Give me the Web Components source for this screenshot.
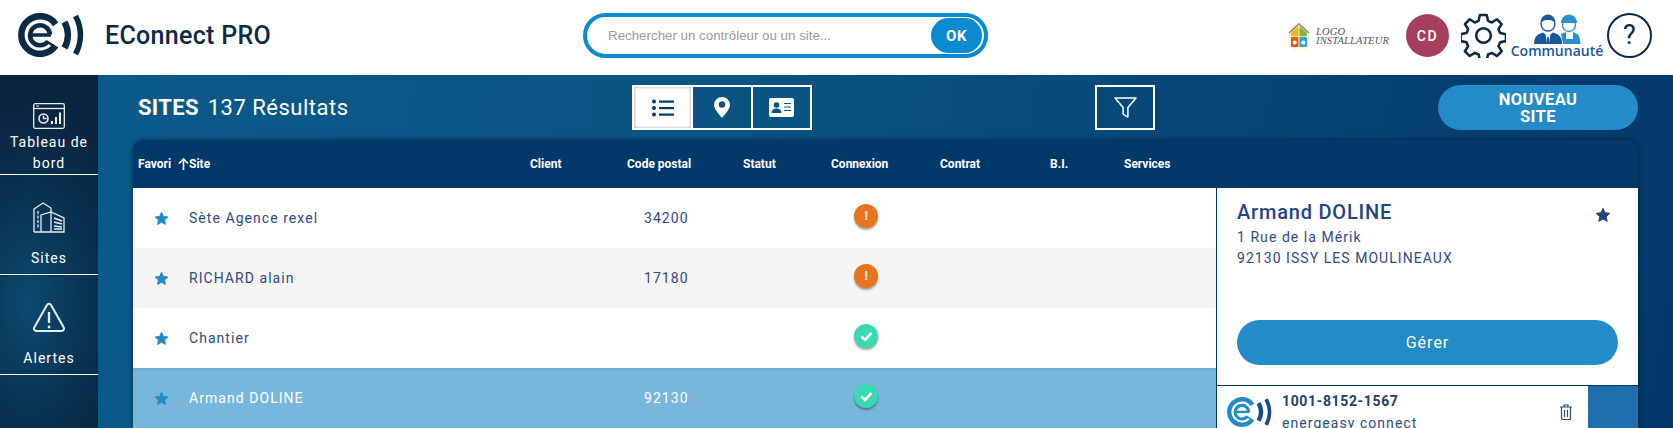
<!doctype html>
<html lang="fr">
<head>
<meta charset="utf-8">
<title>EConnect PRO</title>
<style>
  html, body { margin: 0; height: 100%; overflow: hidden; }
  body { font-family: Roboto, "Liberation Sans", sans-serif; }
</style>
</head>
<body>
<ec-app></ec-app>
<script>
const STAR = 'M12 2l3 6.600 7.200.9-5.300 4.900 1.400 7.100-6.300-3.600-6.300 3.600 1.400-7.100-5.300-4.900 7.200-.9z';

class EcLogo extends HTMLElement {
  connectedCallback() {
    const ring = this.getAttribute('ring') || '#0b2a45';
    const wave = this.getAttribute('wave') || ring;
    this.attachShadow({mode: 'open'}).innerHTML = `
      <style>:host { display: block; line-height: 0; }</style>
      <svg viewBox="0 0 66 44" width="66" height="44" fill="none" aria-hidden="true">
        <path stroke="${ring}" stroke-width="6.500" d="M37.600 11.300A18.800 18.800 0 1 0 37.600 32.700"/>
        <path stroke="${ring}" stroke-width="4.500" d="M32 21.500A10 10 0 1 0 29.500 29"/>
        <path stroke="${ring}" stroke-width="3.500" d="M12 22H33"/>
        <path stroke="${ring}" stroke-width="2.500" d="M28 28l7 4.500"/>
        <path stroke="${wave}" stroke-width="6.500" d="M46.500 9A27 27 0 0 1 46.500 35"/>
        <path stroke="${wave}" stroke-width="5.500" d="M57.500 3A39 39 0 0 1 57.500 41"/>
      </svg>`;
  }
}

class EcHeader extends HTMLElement {
  connectedCallback() {
    this.attachShadow({mode: 'open'}).innerHTML = `
      <style>
        :host { display: grid; grid-template-columns: 583px 405px 299px 386px; height: 75px; background: #fff; align-items: center; }
        .brand { display: flex; align-items: center; padding-left: 18px; margin-top: -5px; }
        .brand span { margin-left: 21px; font-size: 25px; font-weight: 500; color: #0b2a45; letter-spacing: .3px; }
        .search { display: flex; align-items: center; height: 45px; box-sizing: border-box; border: 4px solid #0a8ad0; border-radius: 23px; padding: 0 2px 0 21px; margin-top: -4px; }
        .search span { flex: 1; font-family: "Liberation Sans", sans-serif; font-size: 13.333px; color: #9a9a9a; }
        .search b { width: 51px; height: 35px; border-radius: 18px; background: #0a8ad0; color: #fff; font-size: 15px; font-weight: 700; letter-spacing: .5px; display: flex; align-items: center; justify-content: center; }
        .tools { display: flex; align-items: center; height: 75px; }
        .installer { display: flex; align-items: center; width: 119px; flex: none; margin-top: -4px; }
        .installer svg { filter: blur(.4px) drop-shadow(0 0 2px rgba(240,170,40,.6)); margin-left: 1px; }
        .installer i { font: italic 10.500px/9px "Liberation Serif", serif; color: #555; letter-spacing: .15px; margin-left: 6px; }
        .avatar { width: 43px; height: 43px; flex: none; border-radius: 50%; background: #a53f5b; color: #fff; font-size: 14px; font-weight: 500; letter-spacing: 1.500px; display: flex; align-items: center; justify-content: center; margin-top: -4px; }
        .gear { margin-left: 12px; line-height: 0; margin-top: -4px; }
        .community { display: flex; flex-direction: column; align-items: center; width: 90px; margin-left: 6px; font: 600 14px/13px "Open Sans", sans-serif; color: #17599b; margin-top: -4px; }
        .help { width: 45px; height: 45px; box-sizing: border-box; flex: none; border: 2px solid #0b2a45; border-radius: 50%; margin-left: 5px; margin-top: -4px; font: 400 27px/41px Roboto, sans-serif; text-align: center; color: #0b2a45; }
      </style>
      <div class="brand"><ec-logo></ec-logo><span>EConnect PRO</span></div>
      <div class="search"><span>Rechercher un contrôleur ou un site...</span><b>OK</b></div>
      <div></div>
      <div class="tools">
        <div class="installer">
          <svg viewBox="0 0 22 26" width="22" height="26" aria-hidden="true">
            <path d="M1 10 L11 1 L21 10" fill="none" stroke="#8a8a70" stroke-width="1.500"/>
            <path d="M3 10 L10.400 3.500 V13 H3z" fill="#e9b81e"/>
            <path d="M19 10 L11.600 3.500 V13 H19z" fill="#7cb63a"/>
            <rect x="3" y="14" width="7.400" height="10" rx="1" fill="#e8561a"/>
            <rect x="11.600" y="14" width="7.400" height="10" rx="1" fill="#2aa2e0"/>
            <circle cx="6.700" cy="19.500" r="2" fill="#fff"/><circle cx="15.300" cy="19.500" r="2" fill="#fff"/>
          </svg>
          <i>LOGO<br>INSTALLATEUR</i>
        </div>
        <div class="avatar">CD</div>
        <div class="gear">
          <svg viewBox="0 0 46 46" width="45" height="45" fill="none" stroke="#0b2a45" stroke-width="2.600" stroke-linejoin="round" aria-hidden="true">
            <path d="M19.300 2h7l1.300 6 3.900 1.700 5.200-3.300 4.900 4.900-3.300 5.200 1.700 3.900 6 1.300v7l-6 1.300-1.700 3.900 3.300 5.200-4.900 4.900-5.200-3.300-3.900 1.700-1.300 6h-7l-1.300-6-3.900-1.700-5.200 3.300-4.900-4.900 3.300-5.200-1.700-3.900-6-1.300v-7l6-1.300 1.700-3.900-3.300-5.200 4.900-4.900 5.200 3.300 3.900-1.700z"/>
            <circle cx="23" cy="23" r="7.500"/>
          </svg>
        </div>
        <div class="community">
          <svg viewBox="0 0 48 30" width="48" height="30" aria-hidden="true">
            <path fill="#2a8fd0" d="M28 20l5-2 3.500 3 3.500-3 4 2c2 1 3 3 3.500 10H30z"/>
            <path fill="#fff" d="M33 18h7v7h-7z"/>
            <circle cx="36" cy="11" r="6.500" fill="#fff" stroke="#2a8fd0" stroke-width="1.300"/>
            <path fill="#2a8fd0" d="M28 9c0-5 4-8.500 8-8.500s8 3.500 8 8.500z"/>
            <path fill="#17599b" d="M1 30c0-7 3-10 9-11.500l5 4 5-4c6 1.500 9 4.500 9 11.500z"/>
            <path fill="#fff" d="M12.500 20l2.500 2.500 2.500-2.500 -1.500 10h-2z"/>
            <path fill="#17599b" d="M14.300 23h1.400l1 7h-3.400z"/>
            <circle cx="15" cy="10" r="7" fill="#fff" stroke="#17599b" stroke-width="1.300"/>
            <path fill="#17599b" d="M8 10C7 4 11 .5 15 .5S23 4 22 10c-1-3-3-4-7-4S9 7 8 10z"/>
          </svg>
          <span>Communauté</span>
        </div>
        <div class="help">?</div>
      </div>`;
  }
}

class EcNavItem extends HTMLElement {
  connectedCallback() {
    this.attachShadow({mode: 'open'}).innerHTML = `
      <style>
        :host { display: block; height: 100px; box-sizing: border-box; border-bottom: 1px solid #fff; color: #fff; font-size: 14px; letter-spacing: 1px; line-height: 21px; text-align: center; }
        .icon { height: var(--label-top, 73px); box-sizing: border-box; padding-top: var(--icon-top, 26px); line-height: 0; color: #e8edf0; }
      </style>
      <div class="icon"><slot name="icon"></slot></div>
      <div><slot></slot></div>`;
  }
}

class EcSidebar extends HTMLElement {
  connectedCallback() {
    this.attachShadow({mode: 'open'}).innerHTML = `
      <style>
        :host { display: block; width: 98px; flex: none; background: radial-gradient(ellipse 110px 200px at 30% 65%, #0c4a70 0%, #08304f 60%, #0a2540 100%); }
      </style>
      <slot></slot>`;
  }
}

class EcToolbar extends HTMLElement {
  connectedCallback() {
    this.attachShadow({mode: 'open'}).innerHTML = `
      <style>
        :host { display: grid; grid-template-columns: 494px 180px 283px 60px 283px 200px; height: 45px; margin: 10px 0; padding-left: 40px; color: #fff; align-items: center; }
        .title { font-size: 22px; letter-spacing: .5px; white-space: nowrap; margin-top: -1px; }
        .title b { font-weight: 700; letter-spacing: .3px; margin-right: 3px; }
        .seg { display: flex; height: 45px; border: 2px solid #fff; box-sizing: border-box; gap: 2px; background: #fff; }
        .seg div { flex: 1; background: #0a5382; display: flex; align-items: center; justify-content: center; }
        .seg div.on { background: #fff; box-shadow: inset 0 0 3px #999; }
        .filter { height: 45px; border: 2px solid #fff; box-sizing: border-box; display: flex; align-items: center; justify-content: center; }
        .new { height: 45px; border-radius: 23px; background: #228bc8; font-size: 16.500px; font-weight: 700; line-height: 17px; text-align: center; display: flex; align-items: center; justify-content: center; letter-spacing: .4px; }
      </style>
      <div class="title"><b>SITES</b> 137 Résultats</div>
      <div class="seg">
        <div class="on"><svg viewBox="0 0 22 18" width="22" height="18" aria-hidden="true" fill="#063a68"><circle cx="2" cy="2.500" r="2"/><circle cx="2" cy="9" r="2"/><circle cx="2" cy="15.500" r="2"/><rect x="7" y="1.500" width="15" height="2.200"/><rect x="7" y="8" width="15" height="2.200"/><rect x="7" y="14.500" width="15" height="2.200"/></svg></div>
        <div><svg viewBox="0 0 16 21" width="16" height="21" aria-hidden="true"><path fill="#fff" d="M8 0a8 8 0 0 1 8 8c0 4.500-5 9-8 13C5 17 0 12.500 0 8a8 8 0 0 1 8-8z"/><circle cx="8" cy="7.500" r="3.200" fill="#0a5382"/></svg></div>
        <div><svg viewBox="0 0 25 19" width="25" height="19" aria-hidden="true"><rect width="25" height="19" rx="2" fill="#fff"/><circle cx="7.500" cy="7" r="2.800" fill="#0a5382"/><path fill="#0a5382" d="M2.500 15c0-3 2-4.500 5-4.500s5 1.500 5 4.500z"/><path stroke="#0a5382" stroke-width="1.200" d="M15 5.500h7M15 9h7M15 12.500h7"/></svg></div>
      </div>
      <div></div>
      <div class="filter"><svg viewBox="0 0 26 24" width="25" height="23" fill="none" stroke="#fff" stroke-width="1.600" stroke-linejoin="round" aria-hidden="true"><path d="M2 2h22l-8.500 10v10l-5-3V12z"/></svg></div>
      <div></div>
      <div class="new"><span>NOUVEAU<br>SITE</span></div>`;
  }
}

class EcRow extends HTMLElement {
  connectedCallback() {
    const status = this.getAttribute('status');
    const glyph = status === 'ok'
      ? '<svg viewBox="0 0 13 11" width="13" height="11" aria-hidden="true"><path d="M1.500 5.500l3.500 3.500 6.500-7" fill="none" stroke="#fff" stroke-width="2.600"/></svg>'
      : '<span>!</span>';
    this.attachShadow({mode: 'open'}).innerHTML = `
      <style>
        :host { display: grid; grid-template-columns: var(--cols); height: 60px; align-items: center; font-size: 14px; letter-spacing: 1.050px; color: #2f4a84; background: #fff; }
        :host([alt]) { background: #f5f5f5; }
        :host([selected]) { background: #78b6dc; color: #fff; box-shadow: inset 0 3px 3px -2px rgba(0,0,0,.1); }
        .star { display: flex; justify-content: center; line-height: 0; margin-top: 1px; }
        .name, .code { margin-top: -1px; }
        .code { padding-left: 17px; }
        .dot { width: 24px; height: 24px; border-radius: 50%; margin: -4px 0 0 23px; display: flex; align-items: center; justify-content: center; color: #fff; font-size: 12px; font-weight: 700; box-shadow: 0 2px 2px rgba(0,0,0,.35); background: #e97420; letter-spacing: 0; }
        .dot.ok { background: #38d9b3; }
      </style>
      <div class="star"><svg viewBox="0 0 24 24" width="15" height="15" aria-hidden="true"><path fill="#228bc8" stroke="#228bc8" stroke-width="1.500" stroke-linejoin="round" d="${STAR}"/></svg></div>
      <div class="name"><slot></slot></div>
      <div></div>
      <div class="code">${this.getAttribute('code') || ''}</div>
      <div></div>
      <div><div class="dot ${status === 'ok' ? 'ok' : ''}">${glyph}</div></div>`;
  }
}

class EcPanel extends HTMLElement {
  connectedCallback() {
    this.attachShadow({mode: 'open'}).innerHTML = `
      <style>
        :host { display: block; height: 240px; overflow: hidden; border-left: 1px solid #03386a; color: #2f4a84; background: linear-gradient(100deg, #1b5f98, #1f70ae); }
        .detail { height: 198px; box-sizing: border-box; background: #fff; border-bottom: 1px solid #03386a; padding: 11px 20px 0; position: relative; }
        h2 { margin: 0; font-size: 20px; line-height: 26px; font-weight: 500; letter-spacing: .8px; color: #1f4587; }
        p { margin: 2px 0 0; font-size: 14px; line-height: 21px; letter-spacing: 1.050px; }
        .fav { position: absolute; top: 19px; right: 27px; line-height: 0; }
        .manage { margin-top: 51px; height: 45px; border-radius: 23px; background: #228bc8; color: #fff; font-size: 16px; letter-spacing: 1px; display: flex; align-items: center; justify-content: center; }
        .item { display: flex; width: 371px; height: 60px; background: #fff; padding: 7px 0 0 10px; box-sizing: border-box; position: relative; }
        .item ec-logo { margin-top: 4px; flex: none; width: 44px; transform-origin: 0 0; transform: scale(.68); }
        .txt { margin-left: 11px; font-size: 14px; letter-spacing: 1.050px; line-height: 21px; }
        .txt b { display: block; font-weight: 700; color: #22406f; letter-spacing: .65px; line-height: 17px; margin-bottom: 3px; }
        .trash { position: absolute; left: 342px; top: 18px; line-height: 0; }
      </style>
      <div class="detail">
        <h2>Armand DOLINE</h2>
        <p>1 Rue de la Mérik<br>92130 ISSY LES MOULINEAUX</p>
        <div class="fav"><svg viewBox="0 0 24 24" width="16" height="16" aria-hidden="true"><path fill="#1f4587" stroke="#1f4587" stroke-width="1.500" stroke-linejoin="round" d="${STAR}"/></svg></div>
        <div class="manage">Gérer</div>
      </div>
      <div class="item">
        <ec-logo ring="#228bc8" wave="#134f8f"></ec-logo>
        <div class="txt"><b>1001-8152-1567</b>energeasy connect</div>
        <div class="trash"><svg viewBox="0 0 14 16" width="14" height="16" fill="none" stroke="#2f4a84" stroke-width="1.200" aria-hidden="true"><path d="M1 3h12M5 3V1h4v2M2.500 3v11.500a1 1 0 0 0 1 1h7a1 1 0 0 0 1-1V3M5.500 6v7M8.500 6v7"/></svg></div>
      </div>`;
  }
}

class EcTable extends HTMLElement {
  connectedCallback() {
    this.attachShadow({mode: 'open'}).innerHTML = `
      <style>
        :host { display: block; width: 1505px; margin-left: 35px; border-radius: 10px 10px 0 0; background: #03386a; box-shadow: 0 0 5px rgba(0,0,0,.5); --cols: 56px 341px 97px 116px 88px 109px 110px 74px 1fr; }
        .head { display: grid; grid-template-columns: var(--cols); height: 48px; align-items: center; color: #fff; font-size: 12px; font-weight: 700; }
        .fav { padding-left: 5px; position: relative; }
        .arrow { position: absolute; left: 45px; top: 1px; line-height: 0; }
        .body { display: grid; grid-template-columns: 1083px 422px; }
      </style>
      <div class="head">
        <span class="fav">Favori<span class="arrow"><svg viewBox="0 0 11 12" width="11" height="12" aria-hidden="true"><path d="M5.500 12V1.500M1 5.500l4.500-4.500 4.500 4.500" fill="none" stroke="#fff" stroke-width="1.600"/></svg></span></span>
        <span>Site</span><span>Client</span><span>Code postal</span><span>Statut</span><span>Connexion</span><span>Contrat</span><span>B.I.</span><span>Services</span>
      </div>
      <div class="body">
        <div><slot name="rows"></slot></div>
        <div><slot name="panel"></slot></div>
      </div>`;
  }
}

class EcApp extends HTMLElement {
  connectedCallback() {
    this.attachShadow({mode: 'open'}).innerHTML = `
      <style>
        :host { display: flex; flex-direction: column; height: 428px; overflow: hidden; }
        .under { display: flex; flex: 1; min-height: 0; }
        main { flex: 1; min-width: 0; background: linear-gradient(100deg, #0a5a8c 0%, #0a5382 40%, #03386a 100%); }
      </style>
      <ec-header></ec-header>
      <div class="under">
        <ec-sidebar>
          <ec-nav-item style="--icon-top:28px;--label-top:57px">
            <svg slot="icon" viewBox="0 0 32 26" width="32" height="26" fill="none" stroke="currentColor" stroke-width="1.300" aria-hidden="true"><rect x=".7" y=".7" width="30.600" height="24.600" rx="1.500"/><path d="M.7 5.500h30.600"/><path d="M3 3h3" stroke-width="1"/><circle cx="10.500" cy="15.500" r="4.500" stroke-width="1.600"/><path d="M10.500 12.500v3h3" stroke-width="1.400"/><path d="M19 21v-3M23 21v-7M27 21V9.500" stroke-width="2"/></svg>
            Tableau de bord
          </ec-nav-item>
          <ec-nav-item>
            <svg slot="icon" viewBox="0 0 32 32" width="32" height="32" fill="none" stroke="currentColor" stroke-width="1.300" aria-hidden="true"><path d="M1 31V8l9-6 8 5v4"/><path d="M1 31h30V17L18 11 8 14v17"/><path d="M18 11v20"/><path d="M5 10v18" stroke-dasharray="3 1.500"/><path d="M21 17l8 3M21 21l8 2M21 25l8 1M21 28h8" stroke-width="1.500"/></svg>
            Sites
          </ec-nav-item>
          <ec-nav-item style="--icon-top:27px">
            <svg slot="icon" viewBox="0 0 32 31" width="32" height="31" fill="none" stroke="currentColor" stroke-width="2" stroke-linejoin="round" aria-hidden="true"><path d="M14 3a2.300 2.300 0 0 1 4 0l12.500 22a2.500 2.500 0 0 1-2.200 4H3.700a2.500 2.500 0 0 1-2.200-4z"/><path d="M16 10v11" stroke-width="2.300"/><circle cx="16" cy="25" r="1.400" fill="currentColor" stroke="none"/></svg>
            Alertes
          </ec-nav-item>
        </ec-sidebar>
        <main>
          <ec-toolbar></ec-toolbar>
          <ec-table>
            <div slot="rows">
              <ec-row code="34200" status="warn">Sète Agence rexel</ec-row>
              <ec-row alt code="17180" status="warn">RICHARD alain</ec-row>
              <ec-row status="ok">Chantier</ec-row>
              <ec-row selected code="92130" status="ok">Armand DOLINE</ec-row>
            </div>
            <ec-panel slot="panel"></ec-panel>
          </ec-table>
        </main>
      </div>`;
  }
}

customElements.define('ec-logo', EcLogo);
customElements.define('ec-header', EcHeader);
customElements.define('ec-nav-item', EcNavItem);
customElements.define('ec-sidebar', EcSidebar);
customElements.define('ec-toolbar', EcToolbar);
customElements.define('ec-row', EcRow);
customElements.define('ec-panel', EcPanel);
customElements.define('ec-table', EcTable);
customElements.define('ec-app', EcApp);
</script>
</body>
</html>
